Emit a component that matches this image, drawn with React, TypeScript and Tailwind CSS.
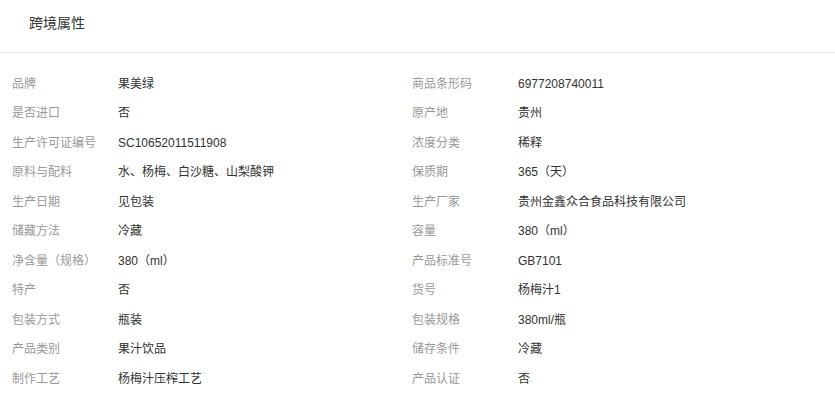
import React from "react";

const rows: [string, string, string, string][] = [
  ["品牌", "果美绿", "商品条形码", "6977208740011"],
  ["是否进口", "否", "原产地", "贵州"],
  ["生产许可证编号", "SC10652011511908", "浓度分类", "稀释"],
  ["原料与配料", "水、杨梅、白沙糖、山梨酸钾", "保质期", "365（天）"],
  ["生产日期", "见包装", "生产厂家", "贵州金鑫众合食品科技有限公司"],
  ["储藏方法", "冷藏", "容量", "380（ml）"],
  ["净含量（规格）", "380（ml）", "产品标准号", "GB7101"],
  ["特产", "否", "货号", "杨梅汁1"],
  ["包装方式", "瓶装", "包装规格", "380ml/瓶"],
  ["产品类别", "果汁饮品", "储存条件", "冷藏"],
  ["制作工艺", "杨梅汁压榨工艺", "产品认证", "否"],
];

export default function App() {
  return (
    <div
      className="w-[835px] h-[395px] bg-white overflow-hidden"
      style={{ fontFamily: '"Liberation Sans", "Noto Sans CJK SC", sans-serif' }}
    >
      <div className="h-[53px] border-b border-[#e5e5e5] pl-[29px] pt-[11px]">
        <span className="text-[14px] leading-[20px] text-[#333]">跨境属性</span>
      </div>
      <div className="pl-[12px] pt-[16px]">
        {rows.map((r, i) => (
          <div key={i} className="grid grid-cols-[400px_1fr] h-[29.5px] items-center text-[12px]">
            <div className="flex">
              <span className="w-[106px] text-[#999]">{r[0]}</span>
              <span className="text-[#333]">{r[1]}</span>
            </div>
            <div className="flex">
              <span className="w-[106px] text-[#999]">{r[2]}</span>
              <span className="text-[#333]">{r[3]}</span>
            </div>
          </div>
        ))}
      </div>
    </div>
  );
}
